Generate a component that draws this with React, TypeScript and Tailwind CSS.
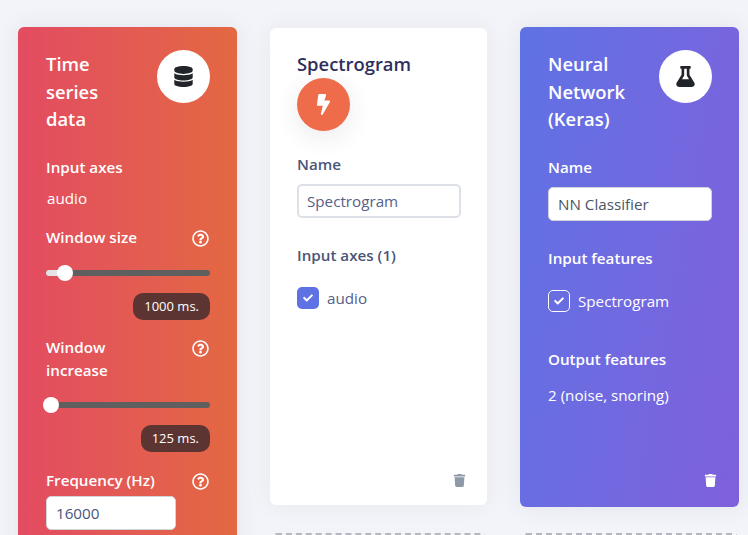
import React from "react";
import { FaDatabase, FaBolt, FaFlask, FaTrash, FaRegQuestionCircle, FaCheck } from "react-icons/fa";

function Help({ className = "" }: { className?: string }) {
  return <FaRegQuestionCircle className={`text-[17px] text-white shrink-0 ${className}`} />;
}

function Slider({ pct, thumb }: { pct: number; thumb: string }) {
  return (
    <div className="relative h-[6px] rounded-full bg-[#5f5f5f]">
      <div className="absolute left-0 top-0 h-full rounded-l-full bg-[#e4e4e4]" style={{ width: `${pct}%` }} />
      <div className={`absolute top-[-5px] h-4 w-4 rounded-full bg-white ${thumb}`} />
    </div>
  );
}

function Badge({ children }: { children: React.ReactNode }) {
  return (
    <div className="flex justify-end">
      <span className="rounded-[10px] bg-[#5c3532] px-[11px] text-[13px] leading-[27px] text-white">{children}</span>
    </div>
  );
}

function Dashed({ className }: { className: string }) {
  return <div className={`h-10 rounded-md border-2 border-dashed border-[#b4b7bf] ${className}`} />;
}

export default function App() {
  return (
    <div
      className="flex h-[535px] w-[748px] items-start overflow-hidden bg-[#f2f4f9] pl-[18px] pr-[9px] pt-[27px] text-[15.2px]"
      style={{ fontFamily: '"Open Sans", sans-serif' }}
    >
      <div className="h-[560px] w-[219px] shrink-0 rounded-md bg-gradient-to-r from-[#e34b61] to-[#e36841] pl-[28px] pr-[27px] pt-[23px] text-white shadow-[0_0_24px_rgba(50,50,93,0.08)]">
        <div className="flex items-start justify-between">
          <h2 className="w-[70px] text-[18.4px] font-semibold leading-[27.7px]">Time series data</h2>
          <div className="flex h-[53px] w-[53px] items-center justify-center rounded-full bg-white text-[#212529]">
            <FaDatabase className="text-[21px]" />
          </div>
        </div>
        <div className="mt-[24px] font-semibold leading-[20px]">Input axes</div>
        <div className="mt-[11px] pl-px leading-[20px]">audio</div>
        <div className="mt-[19px] flex items-center justify-between font-semibold leading-[20px]">
          <span>Window size</span>
          <Help className="mt-[2px] -translate-x-px" />
        </div>
        <div className="mt-[23px]">
          <Slider pct={11} thumb="left-[11px]" />
        </div>
        <div className="mt-[17px]">
          <Badge>1000 ms.</Badge>
        </div>
        <div className="mt-[16px] flex items-start justify-between font-semibold leading-[23px]">
          <span className="w-[80px]">Window increase</span>
          <Help className="mt-[4px] -translate-x-px" />
        </div>
        <div className="mt-[20px]">
          <Slider pct={0} thumb="-left-[3px]" />
        </div>
        <div className="mt-[17px]">
          <Badge>125 ms.</Badge>
        </div>
        <div className="mt-[18px] flex items-center justify-between font-semibold leading-[20px]">
          <span>Frequency (Hz)</span>
          <Help className="mt-[2px] -translate-x-px" />
        </div>
        <div className="mt-[6px] flex h-[34px] w-[130px] items-center rounded-[5px] border border-[#ced4da] bg-white px-[9px] text-[#495580]">16000</div>
      </div>

      <div className="ml-[33px] mt-px w-[217px] shrink-0">
        <div className="flex h-[477px] flex-col rounded-md bg-white pb-[18px] pl-[27px] pr-[26px] pt-[23px] shadow-[0_0_24px_rgba(50,50,93,0.06)]">
          <h2 className="text-[18.4px] font-semibold leading-[26px] text-[#2f2f5e]">Spectrogram</h2>
          <div className="mt-px flex h-[53px] w-[53px] items-center justify-center rounded-full bg-[#ee6c4a] text-white shadow-[0_6px_24px_rgba(50,50,93,0.1)]">
            <FaBolt className="text-[21px]" />
          </div>
          <div className="mt-[23px] font-semibold leading-[20px] text-[#4a5578]">Name</div>
          <div className="mt-[10px] flex h-[34px] items-center rounded-[5px] border-2 border-[#dde1e7] px-[8px] text-[#56608a]">Spectrogram</div>
          <div className="mt-[27px] font-semibold leading-[20px] text-[#4a5578]">Input axes (1)</div>
          <div className="mt-[22px] flex items-center gap-[8px] text-[#56608a]">
            <span className="flex h-[22px] w-[22px] items-center justify-center rounded-[5px] bg-[#5e72e4] text-white">
              <FaCheck className="text-[10px]" />
            </span>
            <span className="leading-[22px]">audio</span>
          </div>
          <div className="-mr-[5px] mt-auto flex justify-end">
            <FaTrash className="text-[13px] text-[#8e99a8]" />
          </div>
        </div>
        <Dashed className="mt-[28px]" />
      </div>

      <div className="ml-[33px] w-[219px] shrink-0">
        <div className="flex h-[480px] flex-col rounded-md bg-linear-100 from-[#5e72e4] to-[#7f60dc] pb-[20px] pl-[28px] pr-[27px] pt-[23px] text-white shadow-[0_0_24px_rgba(50,50,93,0.08)]">
          <div className="flex items-start justify-between">
            <h2 className="w-[85px] text-[18.4px] font-semibold leading-[27.7px]">Neural Network (Keras)</h2>
            <div className="flex h-[53px] w-[53px] items-center justify-center rounded-full bg-white text-[#212529]">
              <FaFlask className="text-[21px]" />
            </div>
          </div>
          <div className="mt-[24px] font-semibold leading-[20px]">Name</div>
          <div className="mt-[10px] flex h-[34px] items-center rounded-[5px] border border-[#ced4da] bg-white px-[9px] text-[#495567]">NN Classifier</div>
          <div className="mt-[27px] font-semibold leading-[20px]">Input features</div>
          <div className="mt-[22px] flex items-center gap-[8px]">
            <span className="flex h-[22px] w-[22px] items-center justify-center rounded-[5px] border border-white">
              <FaCheck className="text-[10px]" />
            </span>
            <span className="leading-[22px]">Spectrogram</span>
          </div>
          <div className="mt-[37px] font-semibold leading-[20px]">Output features</div>
          <div className="mt-[16px] leading-[20px]">2 (noise, snoring)</div>
          <div className="-mr-[5px] mt-auto flex justify-end">
            <FaTrash className="text-[13px]" />
          </div>
        </div>
        <Dashed className="mt-[26px]" />
      </div>
    </div>
  );
}
